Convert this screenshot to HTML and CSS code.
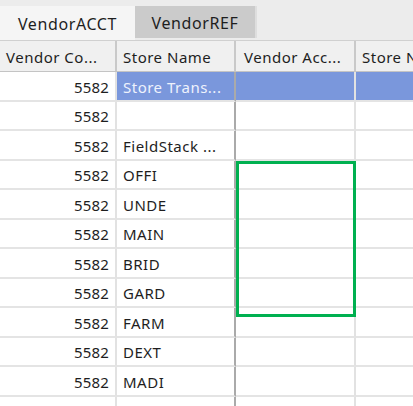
FILE: index.html
```html
<!DOCTYPE html>
<html>
<head>
<meta charset="utf-8">
<link rel="stylesheet" href="styles.css">
</head>
<body>
<div class="window">
  <div class="tabs">
    <div class="tab tab-active">VendorACCT</div>
    <div class="tab tab-inactive">VendorREF</div>
  </div>
  <div class="grid">
    <div class="row head">
      <div class="cell c1">Vendor Co...</div>
      <div class="cell c2">Store Name</div>
      <div class="cell c3">Vendor Acc...</div>
      <div class="cell c4">Store Name</div>
    </div>
    <div class="row sel">
      <div class="cell c1 num">5582</div>
      <div class="cell c2">Store Trans...</div>
      <div class="cell c3"></div>
      <div class="cell c4"></div>
    </div>
    <div class="row">
      <div class="cell c1 num">5582</div>
      <div class="cell c2"></div>
      <div class="cell c3"></div>
      <div class="cell c4"></div>
    </div>
    <div class="row">
      <div class="cell c1 num">5582</div>
      <div class="cell c2">FieldStack ...</div>
      <div class="cell c3"></div>
      <div class="cell c4"></div>
    </div>
    <div class="row">
      <div class="cell c1 num">5582</div>
      <div class="cell c2">OFFI</div>
      <div class="cell c3"></div>
      <div class="cell c4"></div>
    </div>
    <div class="row">
      <div class="cell c1 num">5582</div>
      <div class="cell c2">UNDE</div>
      <div class="cell c3"></div>
      <div class="cell c4"></div>
    </div>
    <div class="row">
      <div class="cell c1 num">5582</div>
      <div class="cell c2">MAIN</div>
      <div class="cell c3"></div>
      <div class="cell c4"></div>
    </div>
    <div class="row">
      <div class="cell c1 num">5582</div>
      <div class="cell c2">BRID</div>
      <div class="cell c3"></div>
      <div class="cell c4"></div>
    </div>
    <div class="row">
      <div class="cell c1 num">5582</div>
      <div class="cell c2">GARD</div>
      <div class="cell c3"></div>
      <div class="cell c4"></div>
    </div>
    <div class="row">
      <div class="cell c1 num">5582</div>
      <div class="cell c2">FARM</div>
      <div class="cell c3"></div>
      <div class="cell c4"></div>
    </div>
    <div class="row">
      <div class="cell c1 num">5582</div>
      <div class="cell c2">DEXT</div>
      <div class="cell c3"></div>
      <div class="cell c4"></div>
    </div>
    <div class="row">
      <div class="cell c1 num">5582</div>
      <div class="cell c2">MADI</div>
      <div class="cell c3"></div>
      <div class="cell c4"></div>
    </div>
    <div class="row">
      <div class="cell c1 num"></div>
      <div class="cell c2"></div>
      <div class="cell c3"></div>
      <div class="cell c4"></div>
    </div>
  </div>
  <div class="highlight"></div>
</div>
</body>
</html>
```

FILE: styles.css
```css
html, body {
  margin: 0;
  padding: 0;
  background: #ffffff;
}
.window {
  position: relative;
  width: 413px;
  height: 406px;
  overflow: hidden;
  font-family: "Noto Sans", "Open Sans", sans-serif;
  font-size: 15px;
  letter-spacing: 0.5px;
  color: #1e1e1e;
}
.tabs {
  display: flex;
  align-items: flex-start;
  height: 40px;
  padding-top: 6px;
  box-sizing: border-box;
  background: #ececec;
}
.tab {
  display: flex;
  align-items: center;
  justify-content: center;
  box-sizing: border-box;
  flex: none;
  font-size: 16px;
  letter-spacing: 0.6px;
  padding-top: 2px;
}
.tab-active {
  width: 135px;
  height: 34px;
  background: #f5f5f5;
}
.tab-inactive {
  width: 122px;
  height: 32px;
  background: #cbcbcb;
  border-right: 2px solid #dedede;
}
.grid {
  display: flex;
  flex-direction: column;
  width: 480px;
}
.row {
  display: flex;
  height: 29.5px;
  flex: none;
}
.row.head {
  height: 32px;
  background: #f0f0f0;
  border-top: 1px solid #d0d0d0;
  border-bottom: 1px solid #c4c4c4;
  box-sizing: border-box;
}
.cell {
  box-sizing: border-box;
  display: flex;
  align-items: center;
  flex: none;
  white-space: nowrap;
  overflow: hidden;
  padding-left: 6px;
  padding-top: 2px;
  border-right: 2px solid #e2e2e2;
  border-bottom: 2px solid #e4e4e4;
}
.head .cell {
  border-bottom: none;
  border-right: 2px solid #c9c9c9;
  padding-left: 6px;
}
.c1 { width: 117px; }
.c2 { width: 119px; }
.c3 { width: 120px; }
.c4 { width: 120px; }
.row:not(.head) .c2 {
  border-right: 2px solid #aaaaaa;
}
.head .c3 { padding-left: 8px; }
.num {
  justify-content: flex-end;
  padding-left: 0;
  padding-right: 6px;
  letter-spacing: 0.2px;
}
.sel .c2, .sel .c3, .sel .c4 {
  background: #7a97dc;
  color: #eef2fc;
}
.highlight {
  position: absolute;
  left: 236px;
  top: 161px;
  width: 120px;
  height: 156px;
  box-sizing: border-box;
  border: 3px solid #00b050;
}
```
